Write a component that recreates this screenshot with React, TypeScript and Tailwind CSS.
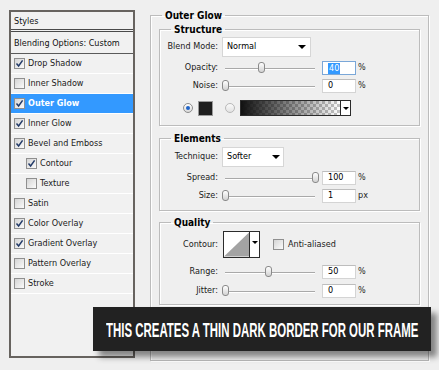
import React from 'react';

const ui = "font-['DejaVu_Sans_Condensed','DejaVu_Sans',sans-serif] text-[9px]";

const styleRows = [
  { label: 'Drop Shadow', on: true },
  { label: 'Inner Shadow' },
  { label: 'Outer Glow', on: true, active: true },
  { label: 'Inner Glow', on: true },
  { label: 'Bevel and Emboss', on: true },
  { label: 'Contour', on: true, sub: true },
  { label: 'Texture', sub: true },
  { label: 'Satin' },
  { label: 'Color Overlay', on: true },
  { label: 'Gradient Overlay', on: true },
  { label: 'Pattern Overlay' },
  { label: 'Stroke' },
];

function Check({ on }: { on?: boolean }) {
  return (
    <span className="w-[11px] h-[11px] shrink-0 border border-[#8f8f8f] bg-[linear-gradient(135deg,#d4d4d4,#fbfbfb)] flex items-center justify-center">
      {on && (
        <svg width="9" height="9" viewBox="0 0 9 9">
          <path d="M1.5 4.6 L3.6 7 L7.6 1.4" fill="none" stroke="#223a68" strokeWidth="1.5" />
        </svg>
      )}
    </span>
  );
}

function Arrow() {
  return <span className="w-0 h-0 border-l-[4px] border-r-[4px] border-t-[4px] border-l-transparent border-r-transparent border-t-black" />;
}

function Slider({ value }: { value: number }) {
  return (
    <div className="relative w-[96px] h-[14px] flex items-center px-[3px]">
      <div className="w-full h-px bg-[#a9a9a9] shadow-[0_1px_0_#fff]" />
      <div
        className="absolute top-[1px] w-[7px] h-[11px] rounded-[3px] border border-[#8a8a8a] bg-[linear-gradient(#ffffff,#d2d2d2)]"
        style={{ left: 3 + value * 0.9 - 3.5 }}
      />
    </div>
  );
}

function Field({ v, sel, unit }: { v: string; sel?: boolean; unit: string }) {
  return (
    <>
      <div className={`ml-[4px] w-[34px] h-[14px] bg-white border flex items-center pl-[5px] text-black ${sel ? 'border-[#7aa7d8]' : 'border-[#d4d4d4] border-t-[#bdbdbd]'}`}>
        {sel ? <span className="bg-[#3399ff] text-white px-px leading-[11px]">{v}</span> : v}
      </div>
      <span className="ml-[2px] text-[#222]">{unit}</span>
    </>
  );
}

function Row({ label, className, children }: { label: string; className?: string; children: React.ReactNode }) {
  return (
    <div className={`flex items-center ${className ?? ''}`}>
      <div className="w-[58px] text-right text-[#1a1a1a]">{label}</div>
      <div className="ml-[4px] flex items-center">{children}</div>
    </div>
  );
}

const group = 'border border-[#bcbcbc] shadow-[inset_1px_1px_0_#fff,1px_1px_0_#fff]';
const legend = 'ml-[11px] px-[3px] font-bold text-[10px] leading-[13px] text-black';

export default function App() {
  return (
    <div className={`relative w-[439px] h-[370px] bg-[#efefef] overflow-hidden flex items-start ${ui}`}>
      {/* styles list */}
      <div className="ml-[9px] mt-[10px] w-[126px] h-[348px] border-2 border-[#67635f] bg-[#f1f1f1] flex flex-col">
        <div className="h-[20px] shrink-0 flex items-center pt-[2px] pl-[3px] text-[#111] border-b-[3px] border-double border-[#4a4a4a]">Styles</div>
        <div className="h-[22px] shrink-0 flex items-center pt-[2px] pl-[3px] text-[#111] border-b border-[#5a5a5a]">Blending Options: Custom</div>
        {styleRows.map((r) => (
          <div
            key={r.label}
            className={`h-[20px] shrink-0 flex items-center gap-[3px] border-b border-white ${r.sub ? 'pl-[15px]' : 'pl-[3px]'} ${r.active ? 'bg-[#3399ff] text-white font-bold' : 'text-[#1a1a1a]'}`}
          >
            <Check on={r.on} />
            <span>{r.label}</span>
          </div>
        ))}
      </div>

      {/* outer glow panel */}
      <fieldset className={`ml-[15px] mt-[9px] w-[279px] h-[352px] ${group}`}>
        <legend className={legend}>Outer Glow</legend>

        <fieldset className={`mx-[8px] mt-px pb-[9px] ${group}`}>
          <legend className={legend}>Structure</legend>
          <Row label="Blend Mode:" className="mt-px">
            <div className="w-[89px] h-[20px] bg-white border border-[#d6d6d6] flex items-center justify-between pl-[4px] pr-[4px] text-black">
              <span>Normal</span>
              <Arrow />
            </div>
          </Row>
          <Row label="Opacity:" className="mt-[4px]">
            <Slider value={40} />
            <Field v="40" sel unit="%" />
          </Row>
          <Row label="Noise:" className="mt-[4px]">
            <Slider value={0} />
            <Field v="0" unit="%" />
          </Row>
          <div className="mt-[7px] h-[16px] flex items-center pl-[23px]">
            <span className="w-[10px] h-[10px] rounded-full border border-[#8d8d8d] bg-[linear-gradient(#fff,#d8d8d8)] flex items-center justify-center">
              <span className="w-[4px] h-[4px] rounded-full bg-[#1f64c8]" />
            </span>
            <span className="ml-[5px] w-[15px] h-[15px] bg-[#1e1e1e] border border-[#9a9a9a]" />
            <span className="ml-[12px] w-[10px] h-[10px] rounded-full border border-[#b8b8b8] bg-[linear-gradient(#fafafa,#e2e2e2)]" />
            <div className="ml-[5px] w-[111px] h-[16px] border border-[#2b2b2b] flex">
              <div className="flex-1 bg-[linear-gradient(to_right,#111,rgba(0,0,0,0)),repeating-conic-gradient(#c4c4c4_0%_25%,#ffffff_0%_50%)] bg-[length:100%_100%,6px_6px]" />
              <div className="w-[10px] border-l border-[#2b2b2b] bg-white flex items-center justify-center">
                <span className="w-0 h-0 border-l-[3px] border-r-[3px] border-t-[3px] border-l-transparent border-r-transparent border-t-black" />
              </div>
            </div>
          </div>
        </fieldset>

        <fieldset className={`mx-[8px] mt-[6px] pb-[7px] ${group}`}>
          <legend className={legend}>Elements</legend>
          <Row label="Technique:" className="mt-[2px]">
            <div className="w-[62px] h-[20px] bg-white border border-[#d6d6d6] flex items-center justify-between pl-[4px] pr-[3px] text-black">
              <span>Softer</span>
              <Arrow />
            </div>
          </Row>
          <Row label="Spread:" className="mt-[4px]">
            <Slider value={100} />
            <Field v="100" unit="%" />
          </Row>
          <Row label="Size:" className="mt-[4px]">
            <Slider value={0} />
            <Field v="1" unit="px" />
          </Row>
        </fieldset>

        <fieldset className={`mx-[8px] mt-[5px] pb-[6px] ${group}`}>
          <legend className={legend}>Quality</legend>
          <Row label="Contour:" className="mt-[2px]">
            <div className="ml-px h-[27px] w-[37px] border border-[#2b2b2b] flex bg-white">
              <svg width="26" height="25" viewBox="0 0 26 25" className="border-r border-[#2b2b2b]">
                <rect width="26" height="25" fill="#fff" />
                <polygon points="0,25 26,0 26,25" fill="#a3a3a3" />
              </svg>
              <div className="flex-1 flex items-start justify-center pt-[9px]">
                <span className="w-0 h-0 border-l-[3px] border-r-[3px] border-t-[3px] border-l-transparent border-r-transparent border-t-black" />
              </div>
            </div>
            <span className="ml-[13px]"><Check /></span>
            <span className="ml-[4px] text-[#1a1a1a]">Anti-aliased</span>
          </Row>
          <Row label="Range:" className="mt-[7px]">
            <Slider value={48} />
            <Field v="50" unit="%" />
          </Row>
          <Row label="Jitter:" className="mt-[5px]">
            <Slider value={0} />
            <Field v="0" unit="%" />
          </Row>
        </fieldset>
      </fieldset>

      {/* caption banner */}
      <div className="absolute left-[93px] top-[307px] w-[338px] h-[44px] bg-[#222222] shadow-[6px_6px_6px_rgba(0,0,0,0.45)] flex items-center">
        <span className="ml-[13px] inline-block whitespace-nowrap origin-left scale-x-[0.545] font-['Liberation_Sans_Narrow','Liberation_Sans',sans-serif] font-bold text-[21px] leading-none text-white">
          THIS CREATES A THIN DARK BORDER FOR OUR FRAME
        </span>
      </div>
    </div>
  );
}
